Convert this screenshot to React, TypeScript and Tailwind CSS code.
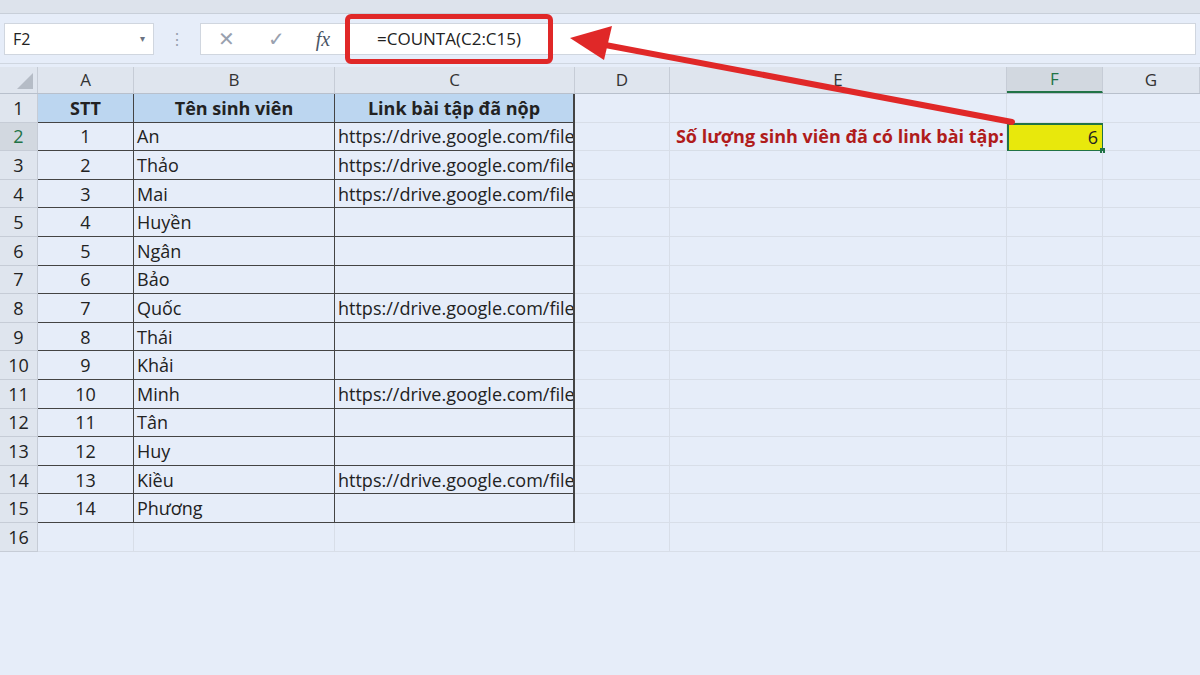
import React from "react";

const cols = [
  { n: "A", w: 96 }, { n: "B", w: 201 }, { n: "C", w: 240 }, { n: "D", w: 95 },
  { n: "E", w: 337 }, { n: "F", w: 96 }, { n: "G", w: 97 },
];
const names = ["An","Thảo","Mai","Huyền","Ngân","Bảo","Quốc","Thái","Khải","Minh","Tân","Huy","Kiều","Phương"];
const links = [1,2,3,7,10,13];
const font = { fontFamily: "'Open Sans','Noto Sans',sans-serif" };

export default function App() {
  const rows = Array.from({ length: 16 }, (_, i) => i + 1);
  return (
    <div className="relative w-[1200px] h-[675px] bg-[#e6edf9] overflow-hidden text-[#222]" style={font}>
      <div className="h-[14px] bg-[#dde3ec] border-b border-[#c8cfd9]" />
      <div className="h-[50px] flex items-center gap-2 px-[4px] border-b border-[#cfd6e0]">
        <div className="w-[150px] h-[32px] bg-white border border-[#d0d6df] flex items-center justify-between px-2 text-[16px]">
          <span>F2</span><span className="text-[10px] text-gray-500">▾</span>
        </div>
        <div className="w-[30px] text-center text-gray-400">⋮</div>
        <div className="flex-1 h-[32px] bg-white border border-[#d0d6df] flex items-center text-[20px]">
          <span className="w-[50px] text-center text-gray-400">✕</span>
          <span className="w-[50px] text-center text-gray-400">✓</span>
          <span className="w-[44px] text-center italic text-gray-600" style={{ fontFamily: "'Liberation Serif',serif" }}>fx</span>
          <div className="w-[208px] h-[50px] border-[5px] border-[#e02828] rounded-md flex items-center justify-center text-[17px]">=COUNTA(C2:C15)</div>
        </div>
      </div>
      <div className="h-[3px]" />
      <div className="flex h-[27px] bg-[#dfe5ee] border-b border-[#b8c0cc] text-[17px] text-[#333]">
        <div className="w-[38px] border-r border-[#c6ccd6] relative">
          <div className="absolute right-1 bottom-1 w-0 h-0 border-l-[16px] border-l-transparent border-b-[16px] border-b-[#b5bcc6]" />
        </div>
        {cols.map(c => (
          <div key={c.n} style={{ width: c.w }} className={`flex items-center justify-center border-r border-[#c6ccd6] ${c.n === "F" ? "bg-[#d2d8e0] border-b-2 border-b-[#217346] text-[#217346]" : ""}`}>{c.n}</div>
        ))}
      </div>
      {rows.map(r => {
        const i = r - 1;
        const tbl = r <= 15;
        const h = r === 1;
        return (
          <div key={r} className="flex h-[28.6px] text-[18px] leading-none">
            <div className={`w-[38px] flex items-center justify-center border-r border-b border-[#c6ccd6] ${r === 2 ? "bg-[#d2d8e0] text-[#217346]" : "bg-[#dfe5ee]"}`}>{r}</div>
            <div style={{ width: 96 }} className={`flex items-center justify-center ${tbl ? "border-r border-b border-[#444] " + (h ? "bg-[#bcd6f0] font-bold" : "") : "border-r border-b border-[#d8dee8]"}`}>{h ? "STT" : tbl ? i : ""}</div>
            <div style={{ width: 201 }} className={`flex items-center ${h ? "justify-center bg-[#bcd6f0] font-bold" : "pl-[3px]"} ${tbl ? "border-r border-b border-[#444]" : "border-r border-b border-[#d8dee8]"}`}>{h ? "Tên sinh viên" : tbl ? names[i - 1] : ""}</div>
            <div style={{ width: 240 }} className={`flex items-center overflow-hidden whitespace-nowrap ${h ? "justify-center bg-[#bcd6f0] font-bold" : "pl-[3px]"} ${tbl ? "border-r-2 border-b border-[#444]" : "border-r border-b border-[#d8dee8]"}`}>{h ? "Link bài tập đã nộp" : links.includes(i) ? "https://drive.google.com/file" : ""}</div>
            <div style={{ width: 95 }} className="border-r border-b border-[#d8dee8]" />
            <div style={{ width: 337 }} className="border-r border-b border-[#d8dee8] flex items-center justify-end pr-[2px] text-[#b01c1c] font-bold text-[18px] whitespace-nowrap">{r === 2 ? "Số lượng sinh viên đã có link bài tập:" : ""}</div>
            <div style={{ width: 96 }} className={`border-r border-b flex items-center justify-end pr-1 relative ${r === 2 ? "bg-[#e8e80c] border-2 border-[#217346]" : "border-[#d8dee8]"}`}>
              {r === 2 && <>6<span className="absolute -right-[3px] -bottom-[3px] w-[5px] h-[5px] bg-[#217346]" /></>}
            </div>
            <div style={{ width: 97 }} className="border-b border-[#d8dee8]" />
          </div>
        );
      })}
      <svg className="absolute inset-0 pointer-events-none" width="1200" height="675">
        <line x1="1012" y1="122" x2="600" y2="44" stroke="#e02828" strokeWidth="6" strokeLinecap="round" />
        <polygon points="570,38 612,26 604,60" fill="#e02828" />
      </svg>
    </div>
  );
}
